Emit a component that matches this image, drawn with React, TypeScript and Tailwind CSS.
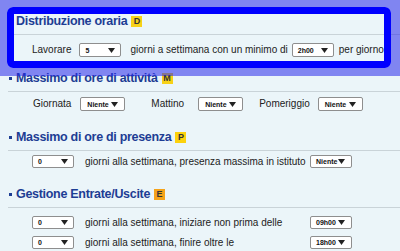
import React from 'react';

// small fake <select> box as drawn by the old form
function Sel({ value, className = '' }: { value: string; className?: string }) {
  return (
    <div
      className={`flex shrink-0 items-center justify-between rounded-[2px] border border-[#8e8e8e] bg-white pl-[5px] pr-[5px] text-[7px] font-bold leading-none text-[#111] ${className}`}
    >
      <span>{value}</span>
      <svg width="7" height="5" viewBox="0 0 7 5">
        <path d="M0 0H7L3.5 5Z" fill="#222" />
      </svg>
    </div>
  );
}

function Heading({ title, badge, badgeClass }: { title: string; badge: string; badgeClass: string }) {
  return (
    <div className="ml-2 flex h-[26px] items-center border-b border-[#c9d3d8] pl-[1px]">
      <span className="mr-[4px] h-[3px] w-[3px] bg-[#1d3d94]" />
      <h2 className="text-[12.5px] font-bold leading-none tracking-[-0.3px] text-[#1d3d94]">{title}</h2>
      <span
        className={`ml-[4px] flex h-[11px] w-[11px] items-center justify-center text-[9px] font-bold leading-none text-[#333] ${badgeClass}`}
      >
        {badge}
      </span>
    </div>
  );
}

export default function App() {
  return (
    <div className="relative min-h-screen overflow-hidden bg-[#ebf5f9] pt-[9px] font-['Liberation_Sans',Arial,sans-serif] text-[10px] leading-[12px] text-[#222]">
      {/* Distribuzione oraria */}
      <section>
        <Heading title="Distribuzione oraria" badge="D" badgeClass="bg-[#f7d117]" />
        <div className="flex items-center pb-[9px] pl-[32px] pt-[8px]">
          <span>Lavorare</span>
          <Sel value="5" className="ml-[8px] h-[14px] w-[42px]" />
          <span className="ml-[9px]">giorni a settimana con un minimo di</span>
          <Sel value="2h00" className="ml-[4px] h-[14px] w-[42px]" />
          <span className="ml-[5px]">per giorno</span>
        </div>
      </section>

      {/* Massimo di ore di attività */}
      <section>
        <Heading title="Massimo di ore di attività" badge="M" badgeClass="bg-[#f7d117]" />
        <div className="flex items-center pb-[14px] pl-[33px] pt-[5px]">
          <span>Giornata</span>
          <Sel value="Niente" className="ml-[9px] h-[14px] w-[45px] pl-[6px] pr-[6px]" />
          <span className="ml-[26px]">Mattino</span>
          <Sel value="Niente" className="ml-[14px] h-[14px] w-[45px] pl-[6px] pr-[6px]" />
          <span className="ml-[16px]">Pomeriggio</span>
          <Sel value="Niente" className="ml-[8px] h-[14px] w-[45px] pl-[6px] pr-[6px]" />
        </div>
      </section>

      {/* Massimo di ore di presenza */}
      <section>
        <Heading title="Massimo di ore di presenza" badge="P" badgeClass="bg-[#fcd20c]" />
        <div className="flex items-center pb-[14px] pl-[32px] pt-[4px]">
          <Sel value="0" className="h-[13px] w-[42px]" />
          <span className="ml-[11px] w-[225px]">giorni alla settimana, presenza massima in istituto</span>
          <Sel value="Niente" className="h-[13px] w-[42px] pr-[6px]" />
        </div>
      </section>

      {/* Gestione Entrate/Uscite */}
      <section>
        <Heading title="Gestione Entrate/Uscite" badge="E" badgeClass="bg-[#f5a319]" />
        <div className="flex flex-col gap-[7px] pl-[32px] pt-[8px]">
          <div className="flex items-center">
            <Sel value="0" className="h-[13px] w-[42px]" />
            <span className="ml-[11px] w-[225px]">giorni alla settimana, iniziare non prima delle</span>
            <Sel value="09h00" className="h-[13px] w-[42px] pr-[6px]" />
          </div>
          <div className="flex items-center">
            <Sel value="0" className="h-[13px] w-[42px]" />
            <span className="ml-[11px] w-[225px]">giorni alla settimana, finire oltre le</span>
            <Sel value="18h00" className="h-[13px] w-[42px] pr-[6px]" />
          </div>
        </div>
      </section>

      {/* tour overlay with highlighted section */}
      <div className="pointer-events-none absolute left-0 right-0 top-0 h-[76px] overflow-hidden">
        <div className="absolute left-[7px] top-[7px] h-[61px] w-[384px] rounded-[6px] border-[7px] border-[#0000ff] shadow-[0_0_0_500px_rgba(40,40,235,0.55)]" />
      </div>
    </div>
  );
}
